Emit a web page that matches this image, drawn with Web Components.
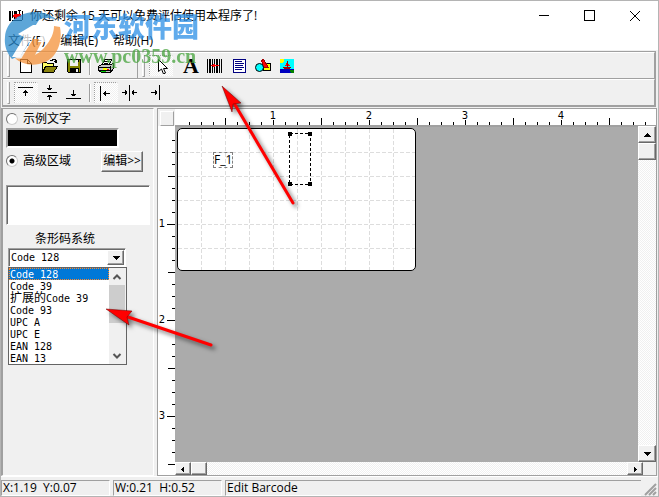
<!DOCTYPE html>
<html lang="zh-CN">
<head>
<meta charset="utf-8">
<title>条形码标签</title>
<style>
html,body{margin:0;height:100%}
body{font:12px/16px "Open Sans","Noto Sans CJK SC",sans-serif;color:#000;overflow:hidden}
</style>
</head>
<body>
<label-app></label-app>
<script>
function define(tag, css, html, ready){
  const t=document.createElement('template');
  t.innerHTML='<style>*{box-sizing:border-box}:host{box-sizing:border-box}'+css+'</style>'+html;
  customElements.define(tag,class extends HTMLElement{
    constructor(){super();this.attachShadow({mode:'open'}).append(t.content.cloneNode(true));}
    connectedCallback(){if(ready)ready(this,this.shadowRoot);}
  });
}
const icons={
app:'<path d="M0 3h2v10H0zM3 3h1v7H3zM5 3h3v8H5zM10 3h1v5h-1zM13 3h1v9h-1z"/><path fill="red" d="M5 6h7v3H8v2H6V9H4z"/><path d="M3 12h10v1H3zM9 2h3v1H9z"/>',
blank:'<path fill="#fff" stroke="#000" d="M2.5 1.5h7l4 4v9h-11zM9.500 1.500v4h4"/>',
open:'<path fill="#ff6" stroke="#000" d="M.5 14.500v-10h4l1 1h6v3"/><path fill="#8b8410" stroke="#000" d="M.5 14.500l3-6h12l-4 6z"/><path fill="none" stroke="#000" d="M8 2.500h2l1-1h2l1 1v2M12 3.500h3M13 4.500h2"/>',
save:'<path fill="#848400" stroke="#000" d="M1.500 1.500h13v13h-12l-1-1z"/><path fill="#efefef" d="M4 2h8v6H4z"/><path d="M4 10h9v5H4zM12 2h1v2h-1z"/><path fill="#efefef" d="M10 11h2v3h-2z"/>',
print:'<path fill="#fff" stroke="#000" d="M4.500 6.500l2-5h7l-2 5zM6 3.500h5M6 5.500h4"/><path fill="#c6c6c6" stroke="#000" d="M.5 8.500l3-2h9l3-1v5l-3 4h-9l-3-2z"/><path d="M0 9h12v1H0zM1 12h11v1H1zM12 8h1v6h-1z"/><path fill="#ff0" d="M5 10h4v2H5z"/><path fill="red" d="M9 11h2v1H9z"/><path fill="#0c0" d="M3 13h5v1H3z"/>',
cursor:'<path shape-rendering="auto" fill="#fff" stroke="#000" d="M5.500 1.500v12l3-2.500 2 5 2-1-2-4.500h4z"/>',
lines:'<path fill="#fff" stroke="#000080" d="M2.500 1.500h12v13h-12z"/><path stroke="#000080" d="M4 3.500h7M4 5.500h9M4 7.500h8M4 9.500h9M4 11.500h7"/>',
barcode:'<path d="M0 1h1v14H0zM2 1h2v14H2zM5 1h1v14H5zM7 1h1v14H7zM9 1h2v14H9zM12 1h1v14h-1zM14 1h1v14h-1z"/><path fill="red" d="M4 7h8v1H4zM6 6h2v3H6z"/>',
shapes:'<path fill="#ff0" stroke="#000" d="M8.500 5.500h7v7h-7z"/><path fill="red" stroke="#a00000" d="M6.500 2.500l2-1 5 8h-5z"/><circle shape-rendering="auto" cx="4.500" cy="9.500" r="4" fill="#0ff" stroke="#000"/>',
picture:'<path fill="#0ff" d="M1 1h14v14H1z"/><path fill="#ff0" d="M1 1h4v3H1zM1 3h3v2H1z"/><path fill="#0000c0" d="M1 11h14v4H1z"/><path fill="#008000" d="M11 12h4v3h-3z"/><path fill="#a00000" d="M4 9h8l-1 2H5z"/><path fill="red" d="M8 4l-2 4h2zM9 5l2 3H9z"/><path fill="#a00000" d="M8 3h1v7H8z"/>',
top:'<path d="M0 2h15v1H0zM7 5h1v6H7zM6 6h3v1H6zM5 7h5v1H5z"/>',
middle:'<path d="M0 7h15v1H0zM7 0h1v5H7zM5 3h5v1H5zM6 4h3v1H6zM7 10h1v5H7zM6 10h3v1H6zM5 11h5v1H5z"/>',
bottom:'<path d="M0 13h15v1H0zM7 5h1v6H7zM5 9h5v1H5zM6 10h3v1H6z"/>',
left:'<path d="M2 1h1v15H2zM5 8h7v1H5zM6 7h1v3H6zM7 6h1v5H7z"/>',
center:'<path d="M7 0h1v16H7zM0 7h5v1H0zM3 5h1v5H3zM4 6h1v3H4zM10 7h5v1h-5zM10 6h1v3h-1zM11 5h1v5h-1z"/>',
right:'<path d="M13 0h1v15h-1zM5 7h6v1H5zM9 5h1v5H9zM10 6h1v3h-1z"/>',
up:'<path d="M8 6h1v1H8zM7 7h3v1H7zM6 8h5v1H6zM5 9h7v1H5z"/>',
down:'<path d="M5 6h7v1H5zM6 7h5v1H6zM7 8h3v1H7zM8 9h1v1H8z"/>',
prev:'<path d="M6 8h1v1H6zM7 7h1v3H7zM8 6h1v5H8z"/>',
next:'<path d="M9 8h1v1H9zM8 7h1v3H8zM7 6h1v5H7z"/>',
min:'<path d="M4 7h10v1H4z"/>',
max:'<path fill="none" stroke="#000" d="M3.500 2.500h10v10h-10z"/>',
close:'<path shape-rendering="auto" fill="none" stroke="#000" d="M3 3l10 10M13 3L3 13"/>',
chevup:'<path shape-rendering="auto" fill="none" stroke="#555" stroke-width="2" d="M4.500 10L8 6.500l3.500 3.500"/>',
chevdown:'<path shape-rendering="auto" fill="none" stroke="#555" stroke-width="2" d="M4.500 6L8 9.500 11.500 6"/>'
};
const dither='repeating-conic-gradient(#fff 0 25%,#f0f0f0 0 50%) 0 0/2px 2px';
const raised='border:1px solid;border-color:#fff #696969 #696969 #fff;box-shadow:inset -1px -1px #a0a0a0;background:#f0f0f0;';
const sunken='border:1px solid;border-color:#a0a0a0 #fff #fff #a0a0a0;';

define('px-icon',':host{display:block;width:16px;height:16px;flex:none}svg{display:block}','<svg width="16" height="16" viewBox="0 0 16 16" shape-rendering="crispEdges"></svg>',
 (h,r)=>{r.querySelector('svg').innerHTML=icons[h.getAttribute('name')]||'';});

define('tool-button',`:host{display:block;flex:none}
button{width:24px;height:21px;padding:0;border:1px solid transparent;background:none;display:grid;place-content:center;color:#000}
:host([pressed]) button{border-color:#a0a0a0 #fff #fff #a0a0a0;border-style:dotted;background:${dither}}
::slotted(b){font:bold 22px/18px "Liberation Serif",serif}`,'<button type="button"><slot></slot></button>',
 (h,r)=>{r.querySelector('button').setAttribute('aria-label',h.getAttribute('label'));});

define('tool-band',`:host{display:flex;align-items:center;height:27px;padding:0 4px;border-top:1px solid #fff;border-bottom:1px solid #a0a0a0;border-right:1px solid #a0a0a0}
i{width:3px;height:22px;margin-right:4px;border-right:1px solid #a0a0a0;border-bottom:1px solid #a0a0a0;border-left:1px solid #fff}`,'<i></i><slot></slot>');

define('tool-bars',`:host{display:block;margin:1px 2px 0 1px;border:1px solid #a0a0a0;background:#f0f0f0}
.row{display:flex}tool-band:last-child{flex:1}hr{width:2px;height:18px;margin:0 3px;border:0;border-left:1px solid #a0a0a0;border-right:1px solid #fff;flex:none}
.file{width:135px}.gap{width:6px}`,
`<div class="row"><tool-band class="file"><tool-button label="新建"><px-icon name="blank"></px-icon></tool-button><tool-button label="打开"><px-icon name="open"></px-icon></tool-button><tool-button label="保存"><px-icon name="save"></px-icon></tool-button><hr><tool-button label="打印"><px-icon name="print"></px-icon></tool-button></tool-band>
<tool-band><tool-button pressed label="选择"><px-icon name="cursor"></px-icon></tool-button><span class="gap"></span><tool-button label="文字"><b>A</b></tool-button><tool-button label="条形码"><px-icon name="barcode"></px-icon></tool-button><tool-button label="段落"><px-icon name="lines"></px-icon></tool-button><tool-button label="图形"><px-icon name="shapes"></px-icon></tool-button><tool-button label="图片"><px-icon name="picture"></px-icon></tool-button></tool-band></div>
<div class="row"><tool-band><tool-button pressed label="上对齐"><px-icon name="top"></px-icon></tool-button><tool-button label="垂直居中"><px-icon name="middle"></px-icon></tool-button><tool-button label="下对齐"><px-icon name="bottom"></px-icon></tool-button><hr><tool-button pressed label="左对齐"><px-icon name="left"></px-icon></tool-button><tool-button label="水平居中"><px-icon name="center"></px-icon></tool-button><tool-button label="右对齐"><px-icon name="right"></px-icon></tool-button></tool-band></div>`);

define('title-bar',`:host{display:flex;height:30px;align-items:center;padding-left:8px;background:#fff}
span{margin-left:5px;flex:1}button{width:46px;height:28px;padding:0;border:0;background:none;display:grid;place-content:center}`,
`<px-icon name="app"></px-icon><span>你还剩余 15 天可以免费评估使用本程序了!</span><button aria-label="最小化"><px-icon name="min"></px-icon></button><button aria-label="最大化"><px-icon name="max"></px-icon></button><button aria-label="关闭"><px-icon name="close"></px-icon></button>`);

define('menu-bar',`:host{display:flex;height:19px;gap:15px;padding:0 7px;background:#fff}
button{font:inherit;border:0;background:none;padding:0;color:#000}`,'<button>文件(F)</button><button>编辑(E)</button><button>帮助(H)</button>');

define('scroll-bar',`:host{display:flex;background:${dither}}
:host([vertical]){flex-direction:column;width:18px}
button{${raised}padding:0;width:16px;height:13px;display:grid;place-content:center;overflow:hidden;flex:none}
:host([vertical]) button{width:18px;height:17px}
.grow{flex:1}`,'<button aria-label="向前"><px-icon></px-icon></button><button aria-label="滑块"></button><span class="grow"></span><button aria-label="向后"><px-icon></px-icon></button>',
 (h,r)=>{const v=h.hasAttribute('vertical');r.querySelectorAll('px-icon').forEach((p,i)=>{const n=document.createElement('px-icon');n.setAttribute('name',v?['up','down'][i]:['prev','next'][i]);p.replaceWith(n);});});

define('code-list',`:host{display:flex;border:1px solid #646464;background:#fff;height:98px}
ul{list-style:none;margin:0;padding:0;flex:1;font:10px/13px "DejaVu Sans Mono","Liberation Mono",monospace}
li{height:12px;padding-left:1px;white-space:nowrap}li span{font:12px/1px "Noto Sans CJK SC",sans-serif}
li[aria-selected]{background:#0078d7;color:#fff;outline:1px dotted #ff8728;outline-offset:-1px}
.bar{width:17px;display:flex;flex-direction:column;background:#f0f0f0}
button{border:0;padding:0;background:none;height:17px;flex:none}.thumb{height:38px;background:#cdcdcd;margin-right:1px}.grow{flex:1}`,
`<ul role="listbox" aria-label="条形码系统"><li role="option" aria-selected="true">Code 128</li><li role="option">Code 39</li><li role="option"><span>扩展的</span>Code 39</li><li role="option">Code 93</li><li role="option">UPC A</li><li role="option">UPC E</li><li role="option">EAN 128</li><li role="option">EAN 13</li></ul>
<div class="bar"><button aria-label="向上"><px-icon name="chevup"></px-icon></button><button class="thumb" aria-label="滑块"></button><span class="grow"></span><button aria-label="向下"><px-icon name="chevdown"></px-icon></button></div>`);

define('side-panel',`:host{display:flex;flex-direction:column;width:153px;flex:none;padding:2px 3px 0 3px;background:#f0f0f0;border-left:2px solid #a0a0a0;border-top:1px solid #a0a0a0;border-right:1px solid #fff;border-bottom:1px solid #fff}
.opt{display:flex;align-items:center;gap:5px;height:16px}
input{appearance:none;width:12px;height:12px;margin:0;border:1px solid;border-color:#707070 #ccc #ccc #707070;border-radius:50%;background:#fff}
input:checked{background:radial-gradient(circle,#000 0 2px,#fff 3px)}
.swatch{width:113px;height:20px;margin:1px 0 0 0;background:#000;border:2px solid;border-color:#a0a0a0 #fff #fff #a0a0a0}
.line{display:flex;align-items:center;height:24px;margin-top:1px}
.line .opt{width:95px}.edit{${raised}font:inherit;color:#000;width:42px;height:21px;padding:0;line-height:16px}
textarea{${sunken}box-shadow:inset 1px 1px #696969;width:100%;height:40px;resize:none;margin:12px 0 6px;background:#fff;flex:none}
.name{padding-left:29px;height:17px}
.combo{position:relative;margin-left:2px;width:118px}
.box{display:flex;height:19px;${sunken}box-shadow:inset 1px 1px #696969;background:#fff;padding:1px}
select{appearance:none;border:0;background:none;flex:1;min-width:0;padding:0 0 0 1px;font:10px/14px "DejaVu Sans Mono",monospace;color:#000}
.drop{${raised}width:17px;padding:0;display:grid;place-content:center;overflow:hidden}
code-list{position:absolute;top:19px;left:0;width:119px}`,
`<label class="opt"><input type="radio" name="m">示例文字</label><div class="swatch"></div>
<div class="line"><label class="opt"><input type="radio" name="m" checked>高级区域</label><button class="edit">编辑&gt;&gt;</button></div>
<textarea aria-label="内容"></textarea><label class="name" for="sys">条形码系统</label>
<div class="combo"><div class="box"><select id="sys"><option>Code 128</option></select><button class="drop" aria-label="展开"><px-icon name="down"></px-icon></button></div><code-list></code-list></div>`);

define('ruler-bar',`:host{display:flex;overflow:hidden;font:10px/14px "DejaVu Sans",sans-serif;background:#fff}
:host(:not([vertical])){height:17px;padding-left:50px;border-bottom:1px solid #a0a0a0;
background:repeating-linear-gradient(90deg,#000 0 1px,transparent 1px 96px) 50px 100%/100% 7px no-repeat,repeating-linear-gradient(90deg,#000 0 1px,transparent 1px 96px) 98px 100%/100% 5px no-repeat,repeating-linear-gradient(90deg,#000 0 1px,transparent 1px 12px) 14px 100%/100% 3px no-repeat,#fff}
:host([vertical]){flex-direction:column;width:17px;padding-top:51px;
background:repeating-linear-gradient(#000 0 1px,transparent 1px 96px) 100% 50px/7px 100% no-repeat,repeating-linear-gradient(#000 0 1px,transparent 1px 96px) 100% 98px/8px 100% no-repeat,repeating-linear-gradient(#000 0 1px,transparent 1px 12px) 100% 14px/3px 100% no-repeat,#fff}
span{flex:none;width:96px;text-align:center}
:host([vertical]) span{width:8px;height:96px;line-height:94px}`,'',
 (h,r)=>{for(let i=1;i<=+h.getAttribute('units');i++){const s=document.createElement('span');s.textContent=i;r.append(s);}});

define('label-sheet',`:host{display:block;flex:1;min-width:0;background:#ababab;padding:1px 2px;border-top:1px solid #a0a0a0}
.paper{position:relative;width:239px;height:143px;border:1px solid #000;border-radius:5px;background:#fff;overflow:hidden}
svg{display:block}.field{position:absolute;left:35px;top:23px;border:1px dashed #808080;font:12px/13px "Open Sans",sans-serif;height:16px;width:20px;white-space:nowrap}
.sel{position:absolute;left:110px;top:3px;overflow:visible}`,
`<div class="paper"><svg width="237" height="141" stroke="#ddd" stroke-dasharray="4 2"><path d="M23.500 0v141M47.500 0v141M71.500 0v141M95.500 0v141M119.500 0v141M143.500 0v141M167.500 0v141M191.500 0v141M215.500 0v141M0 23.500h237M0 47.500h237M0 71.500h237M0 95.500h237M0 119.500h237"/></svg>
<span class="field">F_1</span><svg class="sel" width="25" height="55" shape-rendering="crispEdges"><path fill="none" stroke="#000" stroke-dasharray="3 2" d="M1.500 1.500h21v51h-21z"/><path d="M0 0h4v4H0zM20 0h4v4h-4zM0 50h4v4H0zM20 50h4v4h-4z"/></svg></div>`);

define('work-area',`:host{flex:1;min-width:0;display:grid;grid-template:17px 1fr 13px/17px 1fr 18px;border:1px solid #a0a0a0;margin:0 1px 0 3px}
.corner{${raised}box-shadow:none;border-color:#fff #a0a0a0 #a0a0a0 #fff;margin:2px 1px 0 2px;height:15px}
.top{grid-column:2/4}.left{grid-row:2/4}.across{margin-right:-5px}`,
'<div class="corner"></div><ruler-bar class="top" units="4"></ruler-bar><ruler-bar class="left" vertical units="3"></ruler-bar><label-sheet></label-sheet><scroll-bar vertical></scroll-bar><scroll-bar class="across"></scroll-bar>');

define('status-bar',`:host{display:flex;height:20px;gap:3px;padding-top:3px;background:#f0f0f0;border-top:1px solid #fff}
span{${sunken}height:16px;line-height:14px;width:109px;padding-left:1px;white-space:pre}.last{flex:1;border-right:0}svg{align-self:end}`,
`<span>X:1.19  Y:0.07</span><span>W:0.21  H:0.52</span><span class="last">Edit Barcode</span><svg width="14" height="14" stroke="#a0a0a0" stroke-width="2"><path d="M1 13L12 2M5 13l7-7M9 13l3-3"/></svg>`);

define('site-mark',`:host{position:absolute;left:3px;top:8px;display:flex;pointer-events:none;opacity:.75}
.words{display:flex;flex-direction:column;margin-left:3px;white-space:nowrap}
.cn{font:900 27px/34px "Noto Sans CJK SC",sans-serif;color:#2b8fe6}.url{font:bold 20px/26px "Liberation Serif",serif;color:#46a33c}`,
`<svg width="57" height="60" viewBox="0 0 57 60"><path fill="#2889cc" d="M1 28C2 12 17 3 31 3c9 0 17 3 22 8-8-3-15-2-18 0l-5 8-12 13 8 1-9 13-9 4C3 44 0 37 1 28z"/><path fill="#f5923a" d="M56 18c3 17-4 34-21 37-10 2-19-1-24-6 10 2 22-2 29-10 7-8 10-15 10-22z"/><path fill="#f5923a" d="M17 50l12-20h10L28 52z"/><path fill="#fff" d="M14 25l15-9h17l-4 17h-8l3-9-7 1-14 23h-8l12-20z"/></svg><div class="words"><span class="cn">河东软件园</span><span class="url">www.pc0359.cn</span></div>`);

define('hint-arrows',':host{position:absolute;left:0;top:0;pointer-events:none}svg{display:block;overflow:visible;filter:drop-shadow(3px 3px 2px #0008)}',
`<svg width="310" height="360" viewBox="1 1 310 360" fill="#f00"><path d="M293 203L234 103M211 345L128 317" stroke="#f00" stroke-width="3" stroke-linecap="round"/><path stroke="#600" stroke-width=".5" d="M222 86l19 17-8 1-1 8zM106 309l26 2-5 6 2 8z"/></svg>`);

define('label-app',`:host{display:flex;flex-direction:column;position:relative;height:100vh;border:1px solid #b4b4b4;background:#f0f0f0}
main{display:flex;flex:1;min-height:0;margin-top:1px}`,
'<title-bar></title-bar><menu-bar></menu-bar><tool-bars></tool-bars><main><side-panel></side-panel><work-area></work-area></main><status-bar></status-bar><site-mark></site-mark><hint-arrows></hint-arrows>');
</script>
</body>
</html>
